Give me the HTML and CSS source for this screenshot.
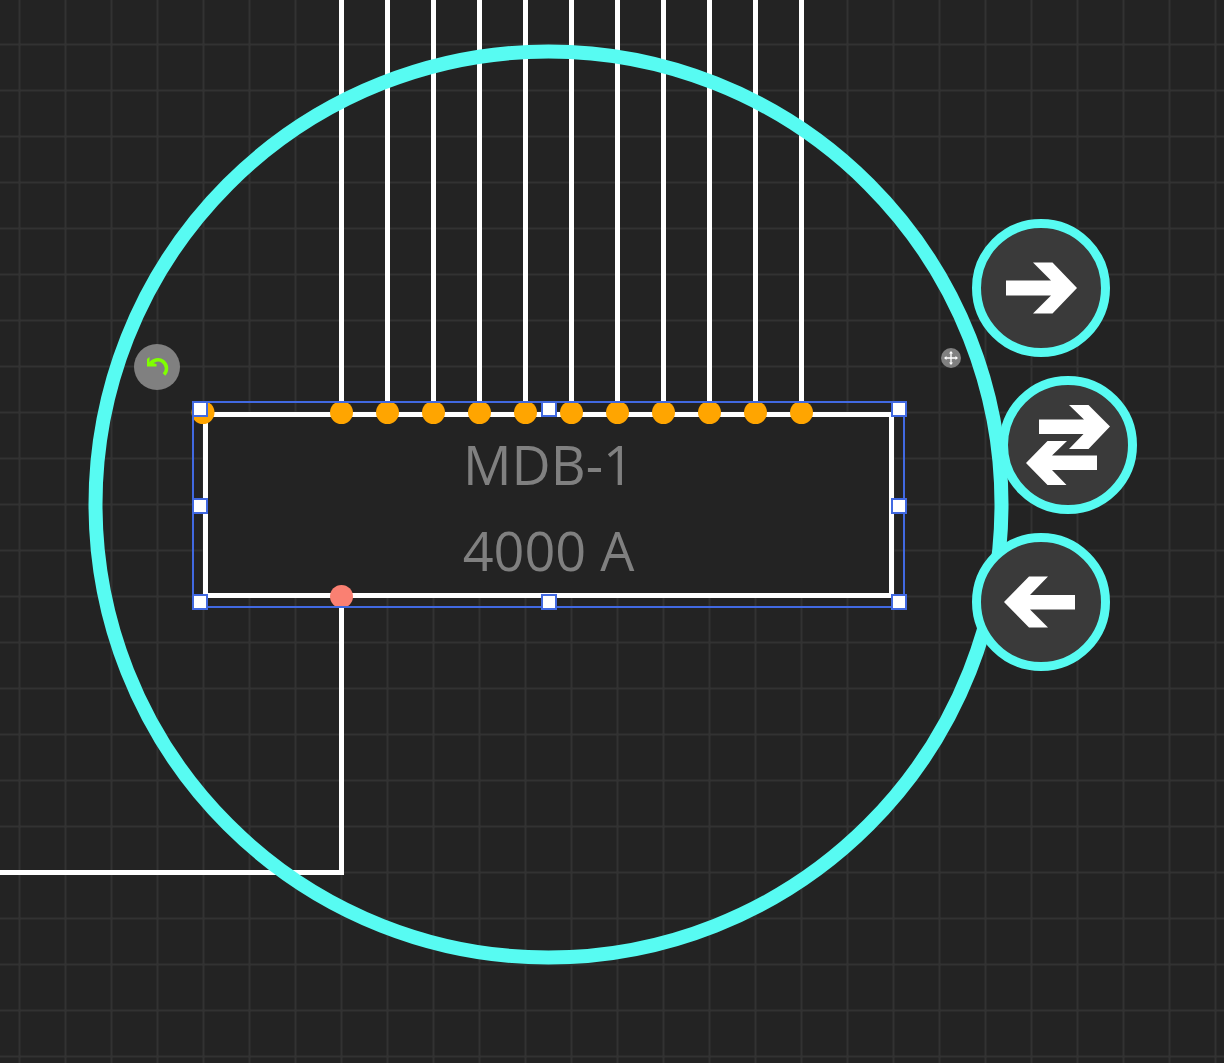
FILE: index.html
```html
<!DOCTYPE html>
<html lang="en">
<head>
<meta charset="utf-8">
<meta name="viewport" content="width=device-width, initial-scale=1">
<title>MDB-1</title>
<link rel="stylesheet" href="styles.css">
</head>
<body>
<main class="canvas">
  <svg class="layer" aria-hidden="true">
    <defs>
      <pattern id="grid" x="18" y="43" width="46" height="46" patternUnits="userSpaceOnUse">
        <path class="grid-line" d="M1.5 0V46M0 1.5H46"/>
      </pattern>
    </defs>
    <rect width="100%" height="100%" fill="url(#grid)"/>
    <path class="wire" d="M341.5 0V412M387.5 0V412M433.5 0V412M479.5 0V412M525.5 0V412M571.5 0V412M617.5 0V412M663.5 0V412M709.5 0V412M755.5 0V412M801.5 0V412M341.5 596V872.5H0"/>
    <circle class="ring" cx="548.5" cy="504.5" r="453"/>
  </svg>

  <section class="board">
    <span class="board-text">MDB-1</span>
    <span class="board-text">4000 A</span>
  </section>

  <svg class="layer overlay" aria-hidden="true">
    <g class="port-in">
      <circle cx="203" cy="412.5" r="11.5"/>
      <circle cx="341.5" cy="412.5" r="11.5"/>
      <circle cx="387.5" cy="412.5" r="11.5"/>
      <circle cx="433.5" cy="412.5" r="11.5"/>
      <circle cx="479.5" cy="412.5" r="11.5"/>
      <circle cx="525.5" cy="412.5" r="11.5"/>
      <circle cx="571.5" cy="412.5" r="11.5"/>
      <circle cx="617.5" cy="412.5" r="11.5"/>
      <circle cx="663.5" cy="412.5" r="11.5"/>
      <circle cx="709.5" cy="412.5" r="11.5"/>
      <circle cx="755.5" cy="412.5" r="11.5"/>
      <circle cx="801.5" cy="412.5" r="11.5"/>
    </g>
    <circle class="port-out" cx="341.5" cy="596.5" r="11.5"/>
    <rect class="selection" x="193" y="402" width="711" height="205"/>
    <g class="handle">
      <rect x="193" y="402" width="14" height="14"/>
      <rect x="542" y="402" width="14" height="14"/>
      <rect x="892" y="402" width="14" height="14"/>
      <rect x="193" y="499" width="14" height="14"/>
      <rect x="892" y="499" width="14" height="14"/>
      <rect x="193" y="595" width="14" height="14"/>
      <rect x="542" y="595" width="14" height="14"/>
      <rect x="892" y="595" width="14" height="14"/>
    </g>
  </svg>

  <button class="tool rotate" type="button" aria-label="Rotate">
    <svg width="46" height="46" viewBox="0 0 46 46"><path fill="none" stroke="#7fff00" stroke-width="3.5" d="M16 20.5C19 15.500 25 14.500 29 17.500C33.500 21 33.500 27 30 30.500"/><path fill="#7fff00" d="M13 15L15.500 13V18L22.500 20V22.500H13Z"/></svg>
  </button>
  <button class="tool move" type="button" aria-label="Move">
    <svg width="20" height="20" viewBox="0 0 20 20"><path fill="none" stroke="#fff" stroke-width="1.3" d="M10 4V16M4 10H16"/><path fill="#fff" d="M10 3L12 5.5H8ZM10 17L12 14.5H8ZM3 10L5.5 8V12ZM17 10L14.5 8V12Z"/></svg>
  </button>
  <button class="tool direction forward" type="button" aria-label="Forward">
    <svg width="138" height="138" viewBox="0 0 138 138"><path fill="#fff" d="M34 61.500H79L61 43.500H80.500L105 69L80.500 94.500H61L79 76.500H34Z"/></svg>
  </button>
  <button class="tool direction both" type="button" aria-label="Both directions">
    <svg width="138" height="138" viewBox="0 0 138 138"><path fill="#fff" d="M40 43.500H85L70 29H89.500L111 50.500L89.500 73H70L84.500 58H40ZM98 79.500H53L68 65H48.500L27 87L48.500 109H67.500L53 94H98Z"/></svg>
  </button>
  <button class="tool direction back" type="button" aria-label="Back">
    <svg width="138" height="138" viewBox="0 0 138 138"><path fill="#fff" d="M103 62H58L76 43.500H57L32 69L57 94.500H76L58 76.500H103Z"/></svg>
  </button>
</main>
</body>
</html>
```
FILE: styles.css
```css
body {
  margin: 0;
  background: #232323;
}

.canvas {
  position: relative;
  min-height: 100vh;
  overflow: hidden;
  font-family: "Open Sans", "Noto Sans", sans-serif;
}

.layer {
  position: absolute;
  inset: 0;
  width: 100%;
  height: 100%;
}

.overlay {
  pointer-events: none;
}

.grid-line {
  fill: none;
  stroke: #323232;
  stroke-width: 2px;
}

.wire {
  fill: none;
  stroke: #fff;
  stroke-width: 5px;
}

.ring {
  fill: none;
  stroke: #57fbf2;
  stroke-width: 14px;
}

.board {
  position: absolute;
  left: 203px;
  top: 412px;
  box-sizing: border-box;
  width: 691px;
  border: 5px solid #fff;
  background: #232323;
  display: flex;
  flex-direction: column;
  align-items: center;
  padding: 4px 0 0;
}

.board-text {
  color: #808080;
  font-size: 54px;
  line-height: 86px;
  white-space: nowrap;
}

.port-in {
  fill: #ffa500;
}

.port-out {
  fill: #fa8072;
}

.selection {
  fill: none;
  stroke: #4169e1;
  stroke-width: 2px;
}

.handle {
  fill: #fff;
  stroke: #4169e1;
  stroke-width: 2px;
}

.tool {
  position: absolute;
  box-sizing: border-box;
  display: grid;
  place-items: center;
  padding: 0;
  border: 0;
  border-radius: 50%;
  background: #808080;
  cursor: pointer;
}

.rotate {
  left: 134px;
  top: 344px;
  width: 46px;
  height: 46px;
}

.move {
  left: 941px;
  top: 348px;
  width: 20px;
  height: 20px;
}

.direction {
  width: 138px;
  height: 138px;
  border: 9px solid #57fbf2;
  background: #3a3a3a;
  place-content: center;
}

.forward {
  left: 972px;
  top: 219px;
}

.both {
  left: 999px;
  top: 376px;
}

.back {
  left: 972px;
  top: 533px;
}
```
